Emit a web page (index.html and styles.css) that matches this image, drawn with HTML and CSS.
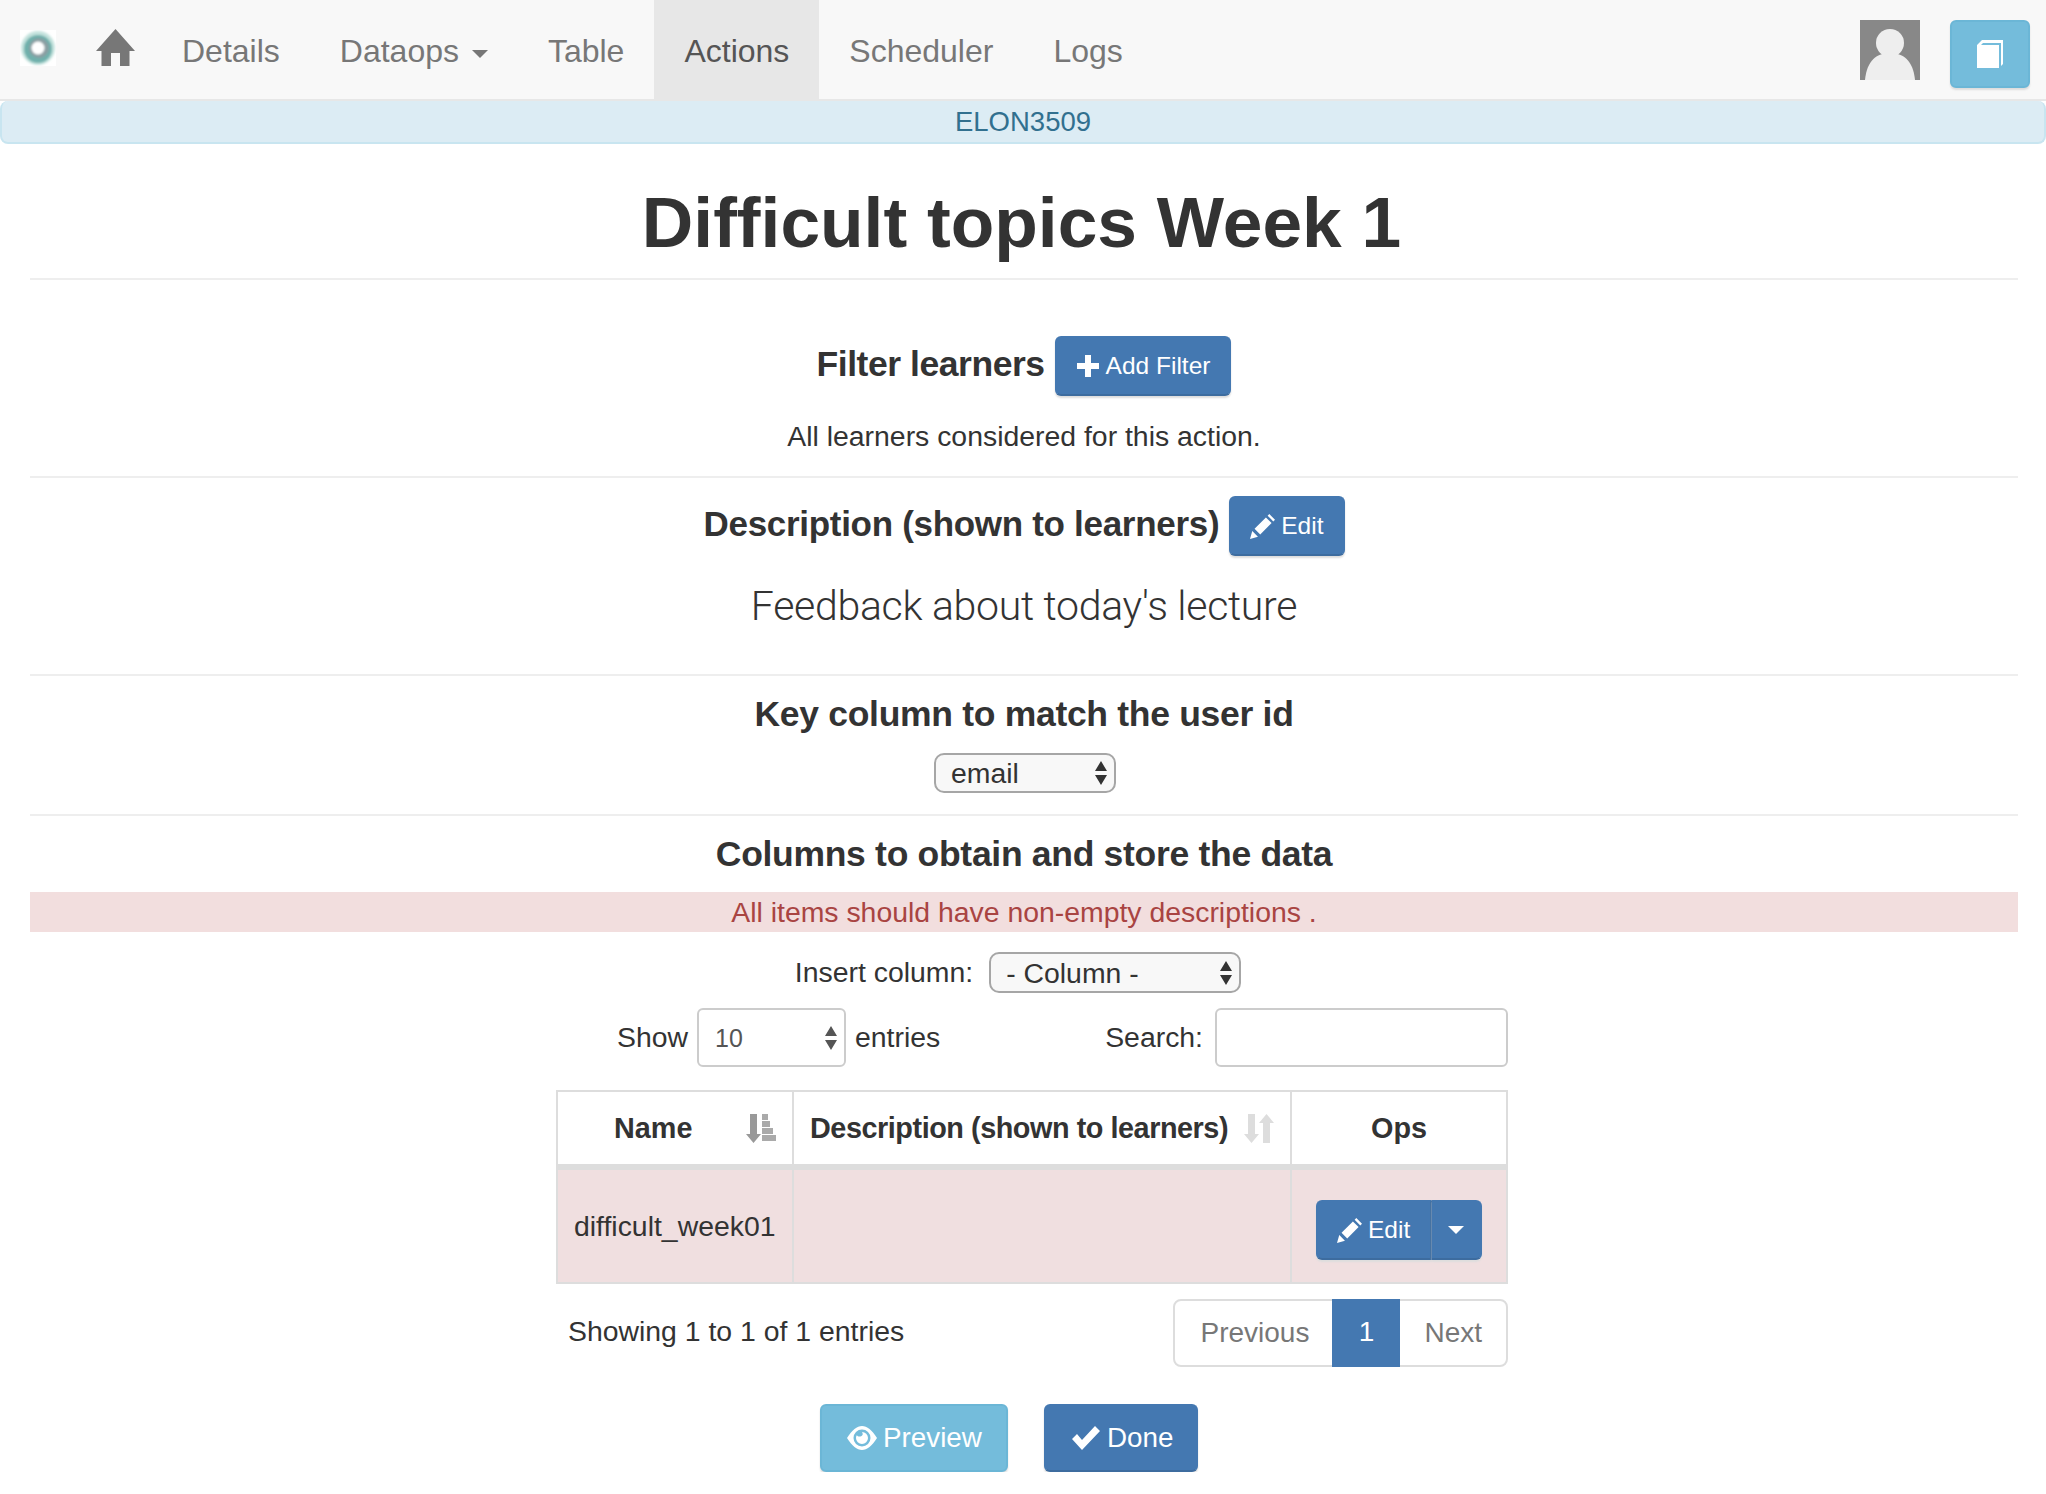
FILE: index.html
```html
<!DOCTYPE html>
<html lang="en">
<head>
    <meta charset="UTF-8">
    <title>Difficult topics Week 1</title>
    <link rel="stylesheet" href="styles.css">
</head>
<body>
<nav class="navbar">
    <svg class="logo" viewBox="0 0 36 36">
        <defs><filter id="soft"><feGaussianBlur stdDeviation="1.300"/></filter></defs>
        <rect width="36" height="36" fill="#fff"/>
        <g filter="url(#soft)">
            <circle cx="18" cy="18" r="17" fill="#c5e3de"/>
            <circle cx="18" cy="19" r="14" fill="#6fb0ac"/>
            <circle cx="19" cy="18" r="10" fill="#8a9fa3"/>
            <circle cx="18" cy="18" r="6.500" fill="#fff"/>
        </g>
    </svg>
    <a class="nav-home" href="#">
        <svg class="home-icon" viewBox="0 0 39 37"><path d="M19.5 0 39 22h-5.500v15H24V24h-9v13H5.500V22H0z" fill="#777"/></svg>
    </a>
    <a class="nav-link" href="#">Details</a>
    <a class="nav-link" href="#">Dataops <span class="caret"></span></a>
    <a class="nav-link" href="#">Table</a>
    <a class="nav-link active" href="#">Actions</a>
    <a class="nav-link" href="#">Scheduler</a>
    <a class="nav-link" href="#">Logs</a>
    <div class="nav-right">
        <svg class="avatar" viewBox="0 0 60 60">
            <rect width="60" height="60" fill="#888"/>
            <circle cx="30" cy="23" r="14" fill="#eee"/>
            <path d="M5 60c2-20 12-27 25-27s23 7 25 27z" fill="#eee"/>
        </svg>
        <a class="btn btn-info btn-book" href="#">
            <svg class="book-icon" viewBox="0 0 26 28"><path d="M0 5 5 0h21v24l-2 2V3H6L4 5h18v23H0z" fill="#fff"/></svg>
        </a>
    </div>
</nav>
<div class="alert-info">ELON3509</div>

<div class="container">
    <h1 class="page-title">Difficult topics Week 1</h1>

    <section class="block block-filter">
        <div class="block-head">
            <h3>Filter learners</h3>
            <a class="btn btn-primary" href="#">
                <svg class="icon" viewBox="0 0 24 24"><path d="M9 1h6v8h8v6h-8v8H9v-8H1V9h8z" fill="#fff"/></svg>
                Add Filter
            </a>
        </div>
        <p class="note">All learners considered for this action.</p>
    </section>

    <section class="block block-desc">
        <div class="block-head">
            <h3>Description (shown to learners)</h3>
            <a class="btn btn-primary" href="#">
                <svg class="icon icon-pencil" viewBox="1 1 22 22"><path d="M1 23l2-7 5 5zM5 14 15 4l5 5-10 10zM16.500 2.500 18 1l5 5-1.500 1.500z" fill="#fff"/></svg>
                Edit
            </a>
        </div>
        <p class="lead">Feedback about today's lecture</p>
    </section>

    <section class="block block-key">
        <h3>Key column to match the user id</h3>
        <div class="select-wrap select-key">
            <select><option>email</option></select>
            <svg class="select-arrows" viewBox="0 0 14 24"><path d="M7 0l6 10H1zM7 24l-6-10h12z" fill="#333"/></svg>
        </div>
    </section>

    <section class="block-columns">
        <h3>Columns to obtain and store the data</h3>
        <div class="alert-danger">All items should have non-empty descriptions .</div>
        <div class="insert-row">
            <label>Insert column:</label>
            <div class="select-wrap select-insert">
                <select><option>- Column -</option></select>
                <svg class="select-arrows" viewBox="0 0 14 24"><path d="M7 0l6 10H1zM7 24l-6-10h12z" fill="#333"/></svg>
            </div>
        </div>

        <div class="table-wrap">
            <div class="table-controls">
                <div class="length-control">
                    <span>Show</span>
                    <div class="select-wrap select-length">
                        <select><option>10</option></select>
                        <svg class="select-arrows" viewBox="0 0 14 24"><path d="M7 0l6 10H1zM7 24l-6-10h12z" fill="#555"/></svg>
                    </div>
                    <span>entries</span>
                </div>
                <div class="search-control">
                    <label>Search:</label>
                    <input type="text">
                </div>
            </div>

            <table class="data-table">
                <thead>
                    <tr>
                        <th class="col-name"><div class="th-inner th-name">Name
                            <svg class="sort-icon" viewBox="0 0 30 29"><path d="M4 0h7v20h4l-7.500 9L0 20h4z" fill="#999"/><path d="M16 0h6v6h-6zM16 7h8v6h-8zM16 14h11v6H16zM16 21h14v6H16z" fill="#aaa"/></svg>
                        </div></th>
                        <th class="col-desc"><div class="th-inner">Description (shown to learners)
                            <svg class="sort-icon" viewBox="0 0 30 29"><path d="M4 0h7v20h4l-7.500 9L0 20h4zM19 29h7V9h4L22.500 0 15 9h4z" fill="#ddd"/></svg>
                        </div></th>
                        <th class="col-ops">Ops</th>
                    </tr>
                </thead>
                <tbody>
                    <tr>
                        <td>difficult_week01</td>
                        <td></td>
                        <td class="ops-cell">
                            <div class="btn-group">
                                <a class="btn btn-primary btn-group-main" href="#">
                                    <svg class="icon icon-pencil" viewBox="1 1 22 22"><path d="M1 23l2-7 5 5zM5 14 15 4l5 5-10 10zM16.500 2.500 18 1l5 5-1.500 1.500z" fill="#fff"/></svg>
                                    Edit
                                </a>
                                <a class="btn btn-primary btn-group-caret" href="#"><span class="caret caret-white"></span></a>
                            </div>
                        </td>
                    </tr>
                </tbody>
            </table>

            <div class="table-footer">
                <div class="table-info">Showing 1 to 1 of 1 entries</div>
                <ul class="pagination">
                    <li>Previous</li>
                    <li class="current">1</li>
                    <li>Next</li>
                </ul>
            </div>
        </div>

        <div class="actions">
            <a class="btn btn-info btn-lg btn-preview" href="#">
                <svg class="icon-lg" viewBox="0 0 30 24"><path fill-rule="evenodd" d="M0 12C5 4 10 0 15 0s10 4 15 12c-5 8-10 12-15 12S5 20 0 12zm15-8.500a8.500 8.500 0 1 0 0 17 8.500 8.500 0 0 0 0-17zM15 6a6 6 0 1 1-6 6c0-1 .3-2 .8-2.800C11 11 14 11 15.500 9 16 8 15.500 7 15 6z" fill="#fff"/></svg>
                Preview
            </a>
            <a class="btn btn-primary btn-lg btn-done" href="#">
                <svg class="icon-lg" viewBox="0 0 28 24"><path d="M0 13l5-5 5 6L23 0l5 5-18 19z" fill="#fff"/></svg>
                Done
            </a>
        </div>
    </section>
</div>
</body>
</html>
```

FILE: styles.css
```css
* {
    box-sizing: border-box;
    margin: 0;
    padding: 0;
}

body {
    font-family: "Liberation Sans", Arial, sans-serif;
    font-size: 28.400px;
    color: #333;
    background: #fff;
}

a {
    text-decoration: none;
}

/* top bar */
.navbar {
    display: flex;
    align-items: stretch;
    height: 101px;
    padding-left: 20px;
    background: #f8f8f8;
    border-bottom: 2px solid #e7e7e7;
}

.logo {
    width: 36px;
    height: 36px;
    margin-top: 30px;
}

.nav-home {
    margin-left: 40px;
    margin-right: 17px;
    padding-top: 29px;
}

.home-icon {
    display: block;
    width: 39px;
    height: 37px;
}

.nav-link {
    height: 99px;
    padding: 0 30px;
    font-size: 32px;
    line-height: 102px;
    color: #777;
    white-space: nowrap;
}

.nav-link.active {
    color: #555;
    background: #e7e7e7;
}

.caret {
    display: inline-block;
    width: 0;
    height: 0;
    margin-left: 4px;
    vertical-align: middle;
    border-top: 8px solid #777;
    border-left: 8px solid transparent;
    border-right: 8px solid transparent;
}

.caret-white {
    margin: 0;
    border-top-color: #fff;
}

.nav-right {
    display: flex;
    align-items: flex-start;
    gap: 30px;
    margin-left: auto;
    padding-top: 20px;
    padding-right: 16px;
}

.avatar {
    display: block;
    width: 60px;
    height: 60px;
}

.btn.btn-book {
    width: 80px;
    height: 68px;
    justify-content: center;
    padding: 0;
}

.book-icon {
    width: 26px;
    height: 28px;
}

.alert-info {
    height: 43px;
    font-size: 27.500px;
    line-height: 41px;
    text-align: center;
    color: #31708f;
    background: #dcecf4;
    border: 2px solid #c8e5f0;
    border-top: 0;
    border-radius: 8px;
}

.container {
    padding: 0 28px 0 30px;
}

.page-title {
    height: 136px;
    padding-top: 25px;
    padding-right: 5px;
    font-size: 71.300px;
    line-height: 106px;
    text-align: center;
    border-bottom: 2px solid #eee;
}

h3 {
    font-size: 35.500px;
    font-weight: bold;
    line-height: 40px;
    text-align: center;
    letter-spacing: -0.300px;
}

.block {
    border-bottom: 2px solid #eee;
}

.block-head {
    display: flex;
    justify-content: center;
    align-items: center;
    gap: 10px;
}

.block-head h3 {
    padding-bottom: 4px;
}

.block-filter {
    height: 198px;
    padding-top: 56px;
}

.block-filter h3 {
    letter-spacing: -0.450px;
}

.block-desc {
    height: 198px;
    padding-top: 18px;
}

.block-desc h3 {
    font-size: 35px;
}

.block-key {
    height: 140px;
    padding-top: 18px;
}

.note {
    margin-top: 24px;
    text-align: center;
}

.lead {
    margin-top: 25px;
    font-family: Roboto, "Liberation Sans", sans-serif;
    font-size: 41px;
    font-weight: 300;
    line-height: 50px;
    text-align: center;
    letter-spacing: -0.300px;
}

/* buttons */
.btn {
    display: inline-flex;
    align-items: center;
    gap: 6px;
    height: 60px;
    padding: 0 19px;
    font-size: 24.500px;
    color: #fff;
    border-radius: 6px;
    white-space: nowrap;
}

.btn-primary {
    background: #4478b1;
    border: 2px solid #4478b1;
    border-bottom-color: #3d6c9f;
    box-shadow: 0 2px 2px #ddd;
}

.btn-info {
    background: #74bcdb;
    border: 2px solid #6bb6d6;
    box-shadow: 0 2px 2px #ddd;
}

.icon {
    width: 24px;
    height: 24px;
}

.icon-pencil {
    width: 25px;
    height: 25px;
}

.icon-lg {
    width: 30px;
    height: 24px;
}

.btn-lg {
    height: 68px;
    font-size: 27.800px;
}

.btn-preview {
    width: 188px;
    padding: 0 0 0 25px;
}

.btn-done {
    width: 154px;
    padding: 0 0 0 25px;
}

/* selects */
.select-wrap {
    position: relative;
    margin: 0 auto;
}

.select-wrap select {
    display: block;
    width: 100%;
    height: 100%;
    font-family: inherit;
    font-size: 28.400px;
    color: #333;
    background: #f8f8f8;
    border: 2px solid #a6a6a6;
    border-radius: 10px;
    padding-left: 15px;
    appearance: none;
}

.select-arrows {
    position: absolute;
    top: 50%;
    right: 8px;
    width: 14px;
    height: 24px;
    margin-top: -12px;
    pointer-events: none;
}

.select-key {
    width: 182px;
    height: 40px;
    margin-top: 19px;
    margin-left: calc(50% - 90px);
}

.select-insert {
    width: 252px;
    height: 41px;
    margin: 0;
}

.select-length {
    width: 149px;
    height: 59px;
    margin: 0;
}

.select-length select {
    padding-left: 16px;
    font-size: 25px;
    color: #555;
    background: #fff;
    border-color: #ccc;
    border-radius: 6px;
}

/* columns section */
.block-columns {
    padding-top: 18px;
}

.alert-danger {
    height: 40px;
    margin-top: 18px;
    line-height: 40px;
    text-align: center;
    color: #a94442;
    background: #f2dede;
}

.insert-row {
    display: flex;
    justify-content: center;
    align-items: center;
    gap: 16px;
    margin-top: 20px;
    padding-right: 12px;
}

.table-wrap {
    width: 952px;
    margin: 15px auto 0 526px;
}

.table-controls {
    display: flex;
    justify-content: space-between;
    align-items: center;
    height: 59px;
    padding-left: 61px;
}

.length-control,
.search-control {
    display: flex;
    align-items: center;
    gap: 9px;
}

.search-control {
    gap: 12px;
}

.search-control input {
    width: 293px;
    height: 59px;
    background: #fff;
    border: 2px solid #ccc;
    border-radius: 6px;
}

.data-table {
    width: 952px;
    margin-top: 23px;
    border-collapse: collapse;
    table-layout: fixed;
}

.data-table th {
    height: 76px;
    padding: 0 16px;
    font-size: 28.800px;
    text-align: center;
    border: 2px solid #ddd;
    border-bottom-width: 6px;
}

.col-name {
    width: 236px;
}

.col-desc {
    width: 498px;
}

.th-inner {
    display: flex;
    justify-content: space-between;
    align-items: center;
    white-space: nowrap;
    letter-spacing: -0.450px;
}

.th-name {
    padding-left: 40px;
    letter-spacing: 0;
}

.sort-icon {
    width: 30px;
    height: 29px;
    flex-shrink: 0;
}

.data-table td {
    height: 116px;
    padding: 0 16px;
    background: #f0dfe0;
    border: 2px solid #ddd;
    white-space: nowrap;
}

.data-table td.ops-cell {
    padding: 8px 0 0 24px;
}

.btn-group {
    display: flex;
    width: 166px;
}

.btn-group-main {
    width: 116px;
    border-radius: 6px 0 0 6px;
    border-right-color: #3d6c9f;
}

.btn-group-caret {
    width: 50px;
    justify-content: center;
    padding: 0;
    border-left: 0;
    border-radius: 0 6px 6px 0;
}

.table-footer {
    display: flex;
    justify-content: space-between;
    align-items: center;
    margin-top: 15px;
    padding-left: 12px;
}

.table-info {
    margin-top: -4px;
}

.pagination {
    display: flex;
    height: 68px;
    font-size: 28px;
    list-style: none;
    border: 2px solid #ddd;
    border-radius: 8px;
}

.pagination li {
    padding: 0 24px;
    line-height: 64px;
    color: #777;
}

.pagination li:first-child {
    padding-left: 25px;
    padding-right: 23px;
}

.pagination li.current {
    width: 68px;
    height: 68px;
    margin-top: -2px;
    padding: 0;
    line-height: 66px;
    text-align: center;
    color: #fff;
    background: #4478b1;
}

.actions {
    display: flex;
    justify-content: center;
    gap: 36px;
    margin-top: 37px;
    padding-right: 30px;
}
```
